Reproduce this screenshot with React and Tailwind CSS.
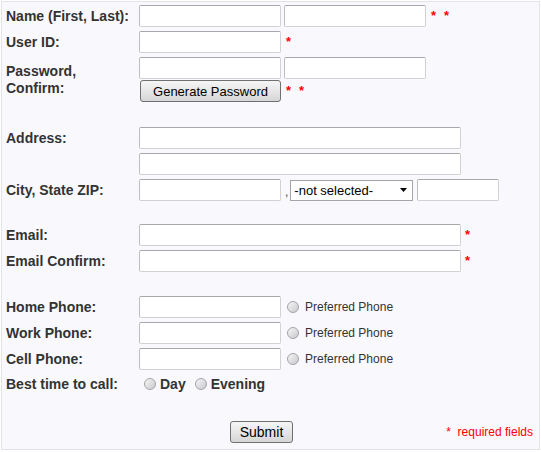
import React from "react";

function TextInput({ w = "w-[142px]" }) {
  return (
    <div
      className={`${w} h-[22px] shrink-0 bg-white border border-[#d2d2d6] border-t-[#a8a8ac] border-l-[#bdbdc2] rounded-[2px]`}
    />
  );
}

function Star({ className = "" }) {
  return (
    <span className={`text-[#ff0000] text-[13px] font-bold leading-none self-start mt-[4px] ${className}`}>*</span>
  );
}

function Radio({ className = "" }) {
  return (
    <span
      className={`inline-block w-[12px] h-[12px] shrink-0 rounded-full border border-[#a3a3a8] bg-linear-to-br from-[#f6f6f6] to-[#c9c9cc] ${className}`}
    />
  );
}

function Label({ children }) {
  return (
    <div className="w-[133px] shrink-0 text-[14px] font-bold text-[#333] leading-[16px]">
      {children}
    </div>
  );
}

function Row({ className = "", children }) {
  return <div className={`flex items-center h-[22px] ${className}`}>{children}</div>;
}

export default function App() {
  return (
    <div className="w-[541px] h-[452px] bg-white font-['Liberation_Sans',Arial,sans-serif]">
      <div className="ml-[1px] mt-[1px] w-[539px] h-[449px] border border-[#e3e3e8] bg-[#f9f9fd] flex flex-col pt-[3px] pl-[4px]">
        <Row>
          <Label>Name (First, Last):</Label>
          <TextInput />
          <div className="ml-[3px]">
            <TextInput />
          </div>
          <Star className="ml-[5px]" />
          <Star className="ml-[8px]" />
        </Row>

        <Row className="mt-[4px]">
          <Label>User ID:</Label>
          <TextInput />
          <Star className="ml-[5px]" />
        </Row>

        <div className="flex mt-[4px]">
          <div className="w-[133px] shrink-0 pt-[6px] text-[14px] font-bold text-[#333] leading-[17px]">
            Password,
            <br />
            Confirm:
          </div>
          <div className="flex flex-col">
            <div className="flex h-[22px]">
              <TextInput />
              <div className="ml-[3px]">
                <TextInput />
              </div>
            </div>
            <div className="flex items-center mt-[1px] h-[22px]">
              <button className="ml-[1px] w-[141px] h-[22px] rounded-[3px] border border-[#707070] bg-linear-to-b from-[#f6f6f6] to-[#d6d6d6] text-[13px] text-black leading-none">
                Generate Password
              </button>
              <Star className="ml-[5px]" />
              <Star className="ml-[8px]" />
            </div>
          </div>
        </div>

        <Row className="mt-[25px]">
          <Label>Address:</Label>
          <TextInput w="w-[322px]" />
        </Row>
        <Row className="mt-[4px]">
          <Label>{"\u00a0"}</Label>
          <TextInput w="w-[322px]" />
        </Row>
        <Row className="mt-[4px]">
          <Label>City, State ZIP:</Label>
          <TextInput />
          <span className="ml-[4px] text-[12px] text-[#444] self-end mb-[3px] leading-none">,</span>
          <div className="ml-[2px] w-[123px] h-[21px] border border-[#a5a5a8] bg-white flex items-center pl-[3px] pr-[5px]">
            <span className="text-[13px] text-black leading-none">-not selected-</span>
            <svg className="ml-auto" width="7" height="4" viewBox="0 0 7 4">
              <path d="M0 0 H7 L3.5 4 Z" fill="#000" />
            </svg>
          </div>
          <div className="ml-[4px]">
            <TextInput w="w-[82px]" />
          </div>
        </Row>

        <Row className="mt-[23px]">
          <Label>Email:</Label>
          <TextInput w="w-[322px]" />
          <Star className="ml-[4px]" />
        </Row>
        <Row className="mt-[4px]">
          <Label>Email Confirm:</Label>
          <TextInput w="w-[322px]" />
          <Star className="ml-[4px]" />
        </Row>

        {["Home Phone:", "Work Phone:", "Cell Phone:"].map((l, i) => (
          <Row key={l} className={i === 0 ? "mt-[24px]" : "mt-[4px]"}>
            <Label>{l}</Label>
            <TextInput />
            <Radio className="ml-[6px]" />
            <span className="ml-[6px] text-[12px] text-[#333] leading-none">Preferred Phone</span>
          </Row>
        ))}

        <Row className="mt-[3px]">
          <Label>Best time to call:</Label>
          <Radio className="ml-[5px]" />
          <span className="ml-[4px] text-[14px] font-bold text-[#333] leading-none">Day</span>
          <Radio className="ml-[9px]" />
          <span className="ml-[4px] text-[14px] font-bold text-[#333] leading-none">Evening</span>
        </Row>

        <div className="flex items-center h-[22px] mt-[26px]">
          <button className="ml-[224px] w-[63px] h-[22px] rounded-[3px] border border-[#707070] bg-linear-to-b from-[#f6f6f6] to-[#d6d6d6] text-[14px] text-black leading-none">
            Submit
          </button>
          <span className="ml-auto mr-[6px] text-[12px] text-[#ff0000] leading-none">
            *&nbsp;&nbsp;required fields
          </span>
        </div>
      </div>
    </div>
  );
}
